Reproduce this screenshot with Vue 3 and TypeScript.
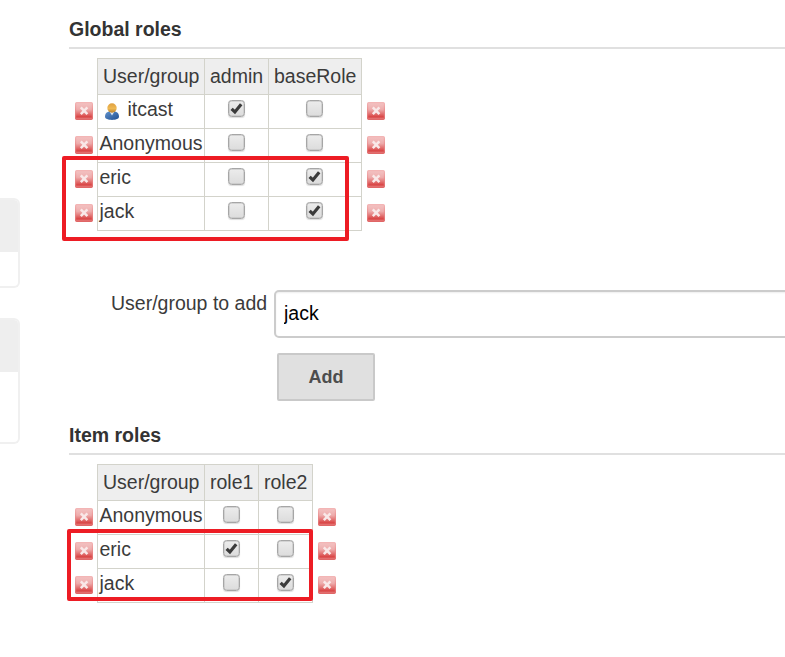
<script setup lang="ts">
import { ref } from 'vue'

interface Row {
  name: string
  user?: boolean
  roles: boolean[]
}
interface Matrix {
  id: string
  title: string
  roles: string[]
  rows: Row[]
}

const matrices = ref<Matrix[]>([
  {
    id: 'global',
    title: 'Global roles',
    roles: ['admin', 'baseRole'],
    rows: [
      { name: 'itcast', user: true, roles: [true, false] },
      { name: 'Anonymous', roles: [false, false] },
      { name: 'eric', roles: [false, true] },
      { name: 'jack', roles: [false, true] },
    ],
  },
  {
    id: 'item',
    title: 'Item roles',
    roles: ['role1', 'role2'],
    rows: [
      { name: 'Anonymous', roles: [false, false] },
      { name: 'eric', roles: [true, false] },
      { name: 'jack', roles: [false, true] },
    ],
  },
])
const newUser = ref('jack')

function remove(m: Matrix, index: number) {
  m.rows.splice(index, 1)
}
</script>

<template>
  <div class="page">
    <svg class="defs" width="0" height="0" aria-hidden="true">
      <defs>
        <linearGradient id="stop-fill" x1="0" y1="0" x2="0" y2="1">
          <stop offset="0" stop-color="#f3c3c3" />
          <stop offset="0.4" stop-color="#eeadad" />
          <stop offset="0.6" stop-color="#e58080" />
          <stop offset="0.85" stop-color="#d94444" />
          <stop offset="1" stop-color="#e78787" />
        </linearGradient>
        <linearGradient id="stop-edge" x1="0" y1="0" x2="0" y2="1">
          <stop offset="0" stop-color="#f3b5b5" />
          <stop offset="1" stop-color="#e06666" />
        </linearGradient>
        <linearGradient id="head-fill" x1="0" y1="0" x2="0" y2="1">
          <stop offset="0" stop-color="#dfa040" />
          <stop offset="0.55" stop-color="#efb953" />
          <stop offset="1" stop-color="#b9822e" />
        </linearGradient>
        <linearGradient id="body-fill" x1="0" y1="0" x2="1" y2="1">
          <stop offset="0" stop-color="#6293cc" />
          <stop offset="1" stop-color="#1f4f92" />
        </linearGradient>
        <symbol id="stop-icon" viewBox="0 0 18 18">
          <rect x="0.6" y="0.6" width="16.8" height="16.8" rx="1.2" fill="url(#stop-fill)" stroke="url(#stop-edge)" stroke-width="1.2" />
          <path d="M5.8 5.3 12.4 12.1M12.4 5.3 5.8 12.1" stroke="#f9e8e8" stroke-width="2.5" />
        </symbol>
      </defs>
    </svg>

    <aside class="side">
      <div class="pane"><div class="pane-head"></div></div>
      <div class="pane tall"><div class="pane-head"></div></div>
    </aside>

    <main class="main">
      <section v-for="m in matrices" :key="m.id" class="section" :class="m.id">
        <h2>{{ m.title }}</h2>
        <div class="matrix">
          <div class="row head">
            <div class="gutter"></div>
            <div class="cell name">User/group</div>
            <div v-for="(r, i) in m.roles" :key="r" class="cell role" :class="'c' + i">{{ r }}</div>
          </div>
          <div v-for="(row, ri) in m.rows" :key="row.name" class="row">
            <div class="gutter" @click="remove(m, ri)"><svg class="stop"><use href="#stop-icon" /></svg></div>
            <div class="cell name">
              <svg v-if="row.user" class="person" viewBox="0 0 16 18">
                <path d="M1 13.8C1 10 3.4 8.3 8 8.3S15 10 15 13.8C15 18 1 18 1 13.8Z" fill="url(#body-fill)" />
                <path d="M5.8 9 8 12.6 10.2 9Z" fill="#dfe8f2" />
                <circle cx="8" cy="5" r="4.7" fill="url(#head-fill)" />
              </svg>
              <span>{{ row.name }}</span>
            </div>
            <div v-for="(_, i) in row.roles" :key="i" class="cell role" :class="'c' + i">
              <label class="check">
                <input v-model="row.roles[i]" type="checkbox" />
                <svg v-if="row.roles[i]" viewBox="0 0 17 17">
                  <path d="M3.6 8.8 6.9 11.9 13.2 4.3" fill="none" stroke="#3b3b3b" stroke-width="3.2" />
                </svg>
              </label>
            </div>
            <div class="gutter end" @click="remove(m, ri)"><svg class="stop"><use href="#stop-icon" /></svg></div>
          </div>
          <div class="mark"></div>
        </div>
        <form v-if="m.id === 'global'" class="add" @submit.prevent>
          <label for="new-user">User/group to add</label>
          <div class="fields">
            <input id="new-user" v-model="newUser" type="text" />
            <button type="button">Add</button>
          </div>
        </form>
      </section>
    </main>
  </div>
</template>

<style>
body {
  margin: 0;
  background: #fff;
}
</style>

<style scoped>
.page {
  display: flex;
  width: 785px;
  height: 657px;
  overflow: hidden;
  background: #fff;
  color: #3b3b3b;
  font: 19.5px/24px "Liberation Sans", Arial, sans-serif;
  box-sizing: border-box;
}
.page * {
  box-sizing: border-box;
}
.defs {
  position: absolute;
}
.side {
  display: flex;
  flex: 0 0 20px;
  flex-direction: column;
  gap: 30px;
  padding-top: 198px;
}
.pane {
  height: 90px;
  border: 2px solid #f0f0f0;
  border-left: 0;
  border-radius: 0 6px 6px 0;
  overflow: hidden;
}
.pane.tall {
  height: 126px;
}
.pane-head {
  height: 52px;
  background: #eee;
}
.main {
  flex: 1;
  min-width: 0;
  padding-left: 49px;
}
.section.global {
  height: 406px;
}
h2 {
  height: 49px;
  margin: 0;
  padding-top: 17px;
  border-bottom: 2px solid #e0e0e0;
  color: #333;
  font-size: 19.5px;
  line-height: 24px;
}
.matrix {
  position: relative;
  width: max-content;
  padding-top: 9px;
}
.row {
  display: flex;
  height: 34px;
}
.row.head {
  height: 37px;
}
.gutter {
  width: 28px;
  padding: 7px 0 0 6px;
}
.gutter.end {
  padding-left: 5px;
}
.stop {
  display: block;
  width: 18px;
  height: 18px;
}
.cell {
  border: solid #d3d3cb;
  border-width: 0 1px 1px 0;
  white-space: nowrap;
}
.cell.name {
  display: flex;
  width: 108px;
  padding: 2px 0 0 1.5px;
  border-left-width: 1px;
}
.cell.role {
  display: flex;
  justify-content: center;
  padding-top: 5px;
}
.global .c0 {
  width: 64px;
}
.global .c1 {
  width: 93px;
  padding-right: 1px;
}
.item .c0,
.item .c1 {
  width: 54px;
}
.head .cell {
  display: block;
  padding: 5px 0 0 5px;
  border-top-width: 1px;
  background: #eee;
}
.person {
  width: 16px;
  height: 18px;
  margin: 6px 8px 0 4px;
}
.check {
  position: relative;
  width: 17px;
  height: 17px;
  border: 1.5px solid #a6a6a6;
  border-radius: 3.5px;
  background: linear-gradient(#ececec, #dcdcdc);
  box-shadow: inset 0 0 0 0.5px #bcbcbc, 0 1px 1px #dedede;
}
.check input {
  position: absolute;
  inset: 0;
  margin: 0;
  opacity: 0;
}
.check svg {
  position: absolute;
  top: -1px;
  left: -1px;
  width: 17px;
  height: 17px;
}
.mark {
  position: absolute;
  border: 4px solid #ed1c24;
  border-radius: 2px;
  pointer-events: none;
}
.global .mark {
  top: 107px;
  left: -7px;
  width: 287px;
  height: 85px;
}
.item .mark {
  top: 74px;
  left: -2px;
  width: 246px;
  height: 72px;
}
.add {
  display: flex;
  margin-top: 59px;
  padding-left: 42px;
}
.add > label {
  flex: none;
  width: 163px;
  padding-top: 1px;
  white-space: nowrap;
}
.fields {
  display: flex;
  flex: none;
  flex-direction: column;
  align-items: flex-start;
  gap: 15px;
}
.fields input {
  width: 560px;
  height: 48px;
  padding: 0 8px 2px;
  border: 2px solid #ccc;
  border-radius: 5px;
  outline: 0;
  box-shadow: inset 0 1px 2px #eee;
  background-color: #fff;
  color: #000;
  font: inherit;
}
.fields button {
  width: 98px;
  height: 48px;
  margin-left: 3px;
  padding: 0;
  border: 2px solid #c9c9c9;
  border-radius: 2px;
  background: #e0e0e0;
  color: #4d4d4d;
  font: bold 18px "Liberation Sans", Arial, sans-serif;
}
</style>
